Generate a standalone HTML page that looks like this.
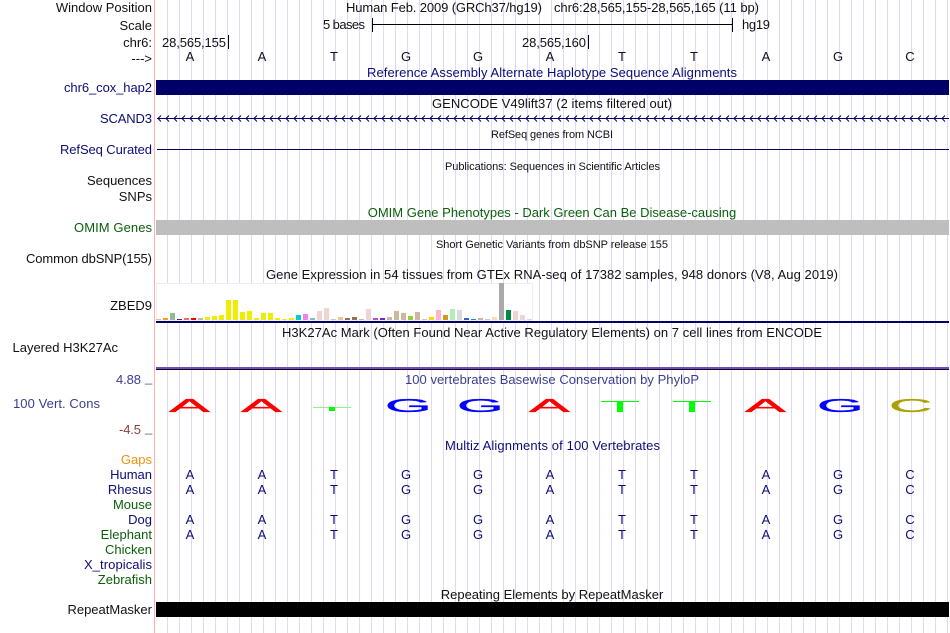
<!DOCTYPE html>
<html>
<head>
<meta charset="utf-8">
<style>
html,body{margin:0;padding:0;background:#fff;width:950px;height:633px;overflow:hidden}
svg{display:block;position:absolute;left:0;top:0}
text{font-family:"Liberation Sans",sans-serif;font-size:13px}
.r{text-anchor:end}
.c{text-anchor:middle}
.n{fill:#0c0c78}
.g{fill:#0a5f0a}
.k{fill:#111}
.s{font-size:11px}
.b{font-size:12px;stroke-width:.22px}
</style>
</head>
<body>
<svg width="950" height="633" viewBox="0 0 950 633" xmlns="http://www.w3.org/2000/svg" shape-rendering="crispEdges">
<path fill="none" stroke="#dedaf6" stroke-width="1" d="M167.500 0v633M179.500 0v633M191.500 0v633M203.500 0v633M215.500 0v633M227.500 0v633M239.500 0v633M251.500 0v633M263.500 0v633M275.500 0v633M287.500 0v633M299.500 0v633M311.500 0v633M323.500 0v633M335.500 0v633M347.500 0v633M359.500 0v633M371.500 0v633M383.500 0v633M395.500 0v633M407.500 0v633M419.500 0v633M431.500 0v633M443.500 0v633M455.500 0v633M467.500 0v633M479.500 0v633M491.500 0v633M503.500 0v633M515.500 0v633M527.500 0v633M539.500 0v633M551.500 0v633M563.500 0v633M575.500 0v633M587.500 0v633M599.500 0v633M611.500 0v633M623.500 0v633M635.500 0v633M647.500 0v633M659.500 0v633M671.500 0v633M683.500 0v633M695.500 0v633M707.500 0v633M719.500 0v633M731.500 0v633M743.500 0v633M755.500 0v633M767.500 0v633M779.500 0v633M791.500 0v633M803.500 0v633M815.500 0v633M827.500 0v633M839.500 0v633M851.500 0v633M863.500 0v633M875.500 0v633M887.500 0v633M899.500 0v633M911.500 0v633M923.500 0v633M935.500 0v633M947.500 0v633"/>
<rect x="154" y="0" width="1" height="633" fill="#ffb0b0"/>

<!-- header -->
<text class="r k" x="152" y="12">Window Position</text>
<text class="r k" x="152" y="30">Scale</text>
<text class="r k" x="152" y="47">chr6:</text>
<text class="r k" x="152" y="63">---&gt;</text>
<text class="k" x="346" y="12" textLength="196">Human Feb. 2009 (GRCh37/hg19)</text>
<text class="k" x="554" y="12" textLength="205">chr6:28,565,155-28,565,165 (11 bp)</text>
<text class="k" x="323" y="29" textLength="42">5 bases</text>
<text class="k" x="742" y="29" textLength="28">hg19</text>
<text class="k" x="162" y="47" textLength="64">28,565,155</text>
<text class="k" x="522" y="47" textLength="64">28,565,160</text>
<rect x="372" y="18" width="1" height="14" fill="#000"/>
<rect x="372" y="24" width="360" height="1" fill="#000"/>
<rect x="732" y="18" width="1" height="14" fill="#000"/>
<rect x="228" y="35" width="1" height="14" fill="#000"/>
<rect x="588" y="35" width="1" height="14" fill="#000"/>
<text class="c k" x="190" y="61">A</text><text class="c k" x="262" y="61">A</text><text class="c k" x="334" y="61">T</text><text class="c k" x="406" y="61">G</text><text class="c k" x="478" y="61">G</text><text class="c k" x="550" y="61">A</text><text class="c k" x="622" y="61">T</text><text class="c k" x="694" y="61">T</text><text class="c k" x="766" y="61">A</text><text class="c k" x="838" y="61">G</text><text class="c k" x="910" y="61">C</text>

<!-- alt haplotypes -->
<text x="367" y="77" fill="#0c0c78" textLength="370">Reference Assembly Alternate Haplotype Sequence Alignments</text>
<text class="n" x="64" y="92" textLength="88">chr6_cox_hap2</text>
<rect x="156" y="80" width="793" height="15" fill="#000066"/>

<!-- gencode -->
<text class="k" x="432" y="108" textLength="240">GENCODE V49lift37 (2 items filtered out)</text>
<text class="n" x="100" y="123" textLength="52">SCAND3</text>
<rect x="157" y="118" width="792" height="1" fill="#000066"/>
<path fill="none" stroke="#000066" stroke-width="1" shape-rendering="auto" d="M161 115.500l-3 3 3 3M169 115.500l-3 3 3 3M177 115.500l-3 3 3 3M185 115.500l-3 3 3 3M193 115.500l-3 3 3 3M201 115.500l-3 3 3 3M209 115.500l-3 3 3 3M217 115.500l-3 3 3 3M225 115.500l-3 3 3 3M233 115.500l-3 3 3 3M241 115.500l-3 3 3 3M249 115.500l-3 3 3 3M257 115.500l-3 3 3 3M265 115.500l-3 3 3 3M273 115.500l-3 3 3 3M281 115.500l-3 3 3 3M289 115.500l-3 3 3 3M297 115.500l-3 3 3 3M305 115.500l-3 3 3 3M313 115.500l-3 3 3 3M321 115.500l-3 3 3 3M329 115.500l-3 3 3 3M337 115.500l-3 3 3 3M345 115.500l-3 3 3 3M353 115.500l-3 3 3 3M361 115.500l-3 3 3 3M369 115.500l-3 3 3 3M377 115.500l-3 3 3 3M385 115.500l-3 3 3 3M393 115.500l-3 3 3 3M401 115.500l-3 3 3 3M409 115.500l-3 3 3 3M417 115.500l-3 3 3 3M425 115.500l-3 3 3 3M433 115.500l-3 3 3 3M441 115.500l-3 3 3 3M449 115.500l-3 3 3 3M457 115.500l-3 3 3 3M465 115.500l-3 3 3 3M473 115.500l-3 3 3 3M481 115.500l-3 3 3 3M489 115.500l-3 3 3 3M497 115.500l-3 3 3 3M505 115.500l-3 3 3 3M513 115.500l-3 3 3 3M521 115.500l-3 3 3 3M529 115.500l-3 3 3 3M537 115.500l-3 3 3 3M545 115.500l-3 3 3 3M553 115.500l-3 3 3 3M561 115.500l-3 3 3 3M569 115.500l-3 3 3 3M577 115.500l-3 3 3 3M585 115.500l-3 3 3 3M593 115.500l-3 3 3 3M601 115.500l-3 3 3 3M609 115.500l-3 3 3 3M617 115.500l-3 3 3 3M625 115.500l-3 3 3 3M633 115.500l-3 3 3 3M641 115.500l-3 3 3 3M649 115.500l-3 3 3 3M657 115.500l-3 3 3 3M665 115.500l-3 3 3 3M673 115.500l-3 3 3 3M681 115.500l-3 3 3 3M689 115.500l-3 3 3 3M697 115.500l-3 3 3 3M705 115.500l-3 3 3 3M713 115.500l-3 3 3 3M721 115.500l-3 3 3 3M729 115.500l-3 3 3 3M737 115.500l-3 3 3 3M745 115.500l-3 3 3 3M753 115.500l-3 3 3 3M761 115.500l-3 3 3 3M769 115.500l-3 3 3 3M777 115.500l-3 3 3 3M785 115.500l-3 3 3 3M793 115.500l-3 3 3 3M801 115.500l-3 3 3 3M809 115.500l-3 3 3 3M817 115.500l-3 3 3 3M825 115.500l-3 3 3 3M833 115.500l-3 3 3 3M841 115.500l-3 3 3 3M849 115.500l-3 3 3 3M857 115.500l-3 3 3 3M865 115.500l-3 3 3 3M873 115.500l-3 3 3 3M881 115.500l-3 3 3 3M889 115.500l-3 3 3 3M897 115.500l-3 3 3 3M905 115.500l-3 3 3 3M913 115.500l-3 3 3 3M921 115.500l-3 3 3 3M929 115.500l-3 3 3 3M937 115.500l-3 3 3 3M945 115.500l-3 3 3 3"/>

<!-- refseq -->
<text class="k s" x="491" y="138" textLength="122">RefSeq genes from NCBI</text>
<text class="n" x="60" y="154" textLength="92">RefSeq Curated</text>
<rect x="157" y="149" width="792" height="1" fill="#000066"/>

<text class="k s" x="445" y="170" textLength="215">Publications: Sequences in Scientific Articles</text>
<text class="r k" x="152" y="185">Sequences</text>
<text class="r k" x="152" y="201">SNPs</text>

<!-- omim -->
<text class="c g" x="552" y="217">OMIM Gene Phenotypes - Dark Green Can Be Disease-causing</text>
<text class="g" x="74" y="232" textLength="78">OMIM Genes</text>
<rect x="156" y="220" width="793" height="15" fill="#bebebe"/>

<text class="k s" x="436" y="248" textLength="232">Short Genetic Variants from dbSNP release 155</text>
<text class="k" x="26" y="263" textLength="126">Common dbSNP(155)</text>

<!-- gtex -->
<text class="k" x="266" y="279" textLength="572">Gene Expression in 54 tissues from GTEx RNA-seq of 17382 samples, 948 donors (V8, Aug 2019)</text>
<text class="r k" x="152" y="310">ZBED9</text>
<rect x="156.500" y="283.500" width="376" height="37" fill="#fff" stroke="#eeeeee" stroke-width="1"/>
<g>
<rect x="156" y="319" width="5" height="1" fill="#e5b98f"/>
<rect x="163" y="318" width="5" height="2" fill="#ff9a1f"/>
<rect x="170" y="313" width="5" height="7" fill="#8fbc8f"/>
<rect x="177" y="319" width="5" height="1" fill="#6b1f6b"/>
<rect x="184" y="318" width="5" height="2" fill="#ff6a5f"/>
<rect x="191" y="318" width="5" height="2" fill="#ff0000"/>
<rect x="198" y="318" width="5" height="2" fill="#cdb79e"/>
<rect x="205" y="317" width="5" height="3" fill="#eeee00"/>
<rect x="212" y="316" width="5" height="4" fill="#eeee00"/>
<rect x="219" y="315" width="5" height="5" fill="#eeee00"/>
<rect x="226" y="300" width="5" height="20" fill="#eeee00"/>
<rect x="233" y="300" width="5" height="20" fill="#eeee00"/>
<rect x="240" y="312" width="5" height="8" fill="#eeee00"/>
<rect x="247" y="311" width="5" height="9" fill="#eeee00"/>
<rect x="254" y="318" width="5" height="2" fill="#eeee00"/>
<rect x="261" y="313" width="5" height="7" fill="#eeee00"/>
<rect x="268" y="313" width="5" height="7" fill="#eeee00"/>
<rect x="275" y="318" width="5" height="2" fill="#eeee00"/>
<rect x="282" y="319" width="5" height="1" fill="#eeee00"/>
<rect x="289" y="318" width="5" height="2" fill="#eeee00"/>
<rect x="296" y="315" width="5" height="5" fill="#00cdcd"/>
<rect x="303" y="314" width="5" height="6" fill="#ee82ee"/>
<rect x="310" y="318" width="5" height="2" fill="#8db6cd"/>
<rect x="317" y="311" width="5" height="9" fill="#eed5d2"/>
<rect x="324" y="308" width="5" height="12" fill="#eed5d2"/>
<rect x="331" y="319" width="5" height="1" fill="#cdc5bf"/>
<rect x="338" y="317" width="5" height="3" fill="#eec591"/>
<rect x="345" y="318" width="5" height="2" fill="#8b7355"/>
<rect x="352" y="317" width="5" height="3" fill="#8b7355"/>
<rect x="359" y="319" width="5" height="1" fill="#cdb79e"/>
<rect x="366" y="309" width="5" height="11" fill="#eed5d2"/>
<rect x="373" y="318" width="5" height="2" fill="#b452cd"/>
<rect x="380" y="318" width="5" height="2" fill="#7d26cd"/>
<rect x="387" y="317" width="5" height="3" fill="#cdb79e"/>
<rect x="394" y="311" width="5" height="9" fill="#cdb79e"/>
<rect x="401" y="313" width="5" height="7" fill="#cdb79e"/>
<rect x="408" y="316" width="5" height="4" fill="#9acd32"/>
<rect x="415" y="312" width="5" height="8" fill="#cdb79e"/>
<rect x="422" y="319" width="5" height="1" fill="#cdc9c9"/>
<rect x="429" y="317" width="5" height="3" fill="#ffd700"/>
<rect x="436" y="310" width="5" height="10" fill="#ffb5c5"/>
<rect x="443" y="315" width="5" height="5" fill="#cd9b1d"/>
<rect x="450" y="309" width="5" height="11" fill="#b4eeb4"/>
<rect x="457" y="310" width="5" height="10" fill="#d9d9d9"/>
<rect x="464" y="318" width="5" height="2" fill="#3a5fcd"/>
<rect x="471" y="319" width="5" height="1" fill="#1c86ee"/>
<rect x="478" y="318" width="5" height="2" fill="#cdb79e"/>
<rect x="485" y="319" width="5" height="1" fill="#cdc5bf"/>
<rect x="492" y="317" width="5" height="3" fill="#ffdab9"/>
<rect x="499" y="283" width="5" height="37" fill="#aaaaaa"/>
<rect x="506" y="310" width="5" height="10" fill="#008b45"/>
<rect x="513" y="311" width="5" height="9" fill="#eed5d2"/>
<rect x="520" y="315" width="5" height="5" fill="#eed5d2"/>
<rect x="527" y="319" width="5" height="1" fill="#d9d9d9"/>
</g>
<rect x="156" y="321" width="793" height="2" fill="#000066"/>

<!-- h3k27ac -->
<text class="k" x="282" y="337" textLength="540">H3K27Ac Mark (Often Found Near Active Regulatory Elements) on 7 cell lines from ENCODE</text>
<text class="r k" x="118" y="352">Layered H3K27Ac</text>
<rect x="156" y="367" width="793" height="2" fill="#6a4fc0"/>
<rect x="156" y="369" width="793" height="1" fill="#200020"/>

<!-- conservation -->
<text x="405" y="384" fill="#3d3d8f" textLength="294">100 vertebrates Basewise Conservation by PhyloP</text>
<text x="116" y="384" fill="#3d3d8f" textLength="25">4.88</text>
<text x="119" y="434" fill="#8f3d3d" textLength="22">-4.5</text>
<text x="145" y="382" fill="#666">_</text>
<text x="145" y="432" fill="#666">_</text>
<text x="13" y="408" fill="#3d3d8f" textLength="87">100 Vert. Cons</text>

<!-- logo -->
<g shape-rendering="auto">
<text class="b" transform="translate(169 412) scale(5.1 1.55)" fill="#ff0000" stroke="#ff0000">A</text>
<text class="b" transform="translate(241 412) scale(5.1 1.55)" fill="#ff0000" stroke="#ff0000">A</text>
<text class="b" transform="translate(529 412) scale(5.1 1.55)" fill="#ff0000" stroke="#ff0000">A</text>
<text class="b" transform="translate(745 412) scale(5.1 1.55)" fill="#ff0000" stroke="#ff0000">A</text>
<text class="b" transform="translate(385 412) scale(5 1.55)" fill="#0000ff" stroke="#0000ff">G</text>
<text class="b" transform="translate(457 412) scale(5 1.55)" fill="#0000ff" stroke="#0000ff">G</text>
<text class="b" transform="translate(817 412) scale(5 1.55)" fill="#0000ff" stroke="#0000ff">G</text>
<text class="b" transform="translate(889 412) scale(5 1.55)" fill="#aaa000" stroke="#aaa000">C</text>
</g>
<rect x="313" y="407" width="38" height="1" fill="#90f090"/>
<rect x="329" y="407" width="6" height="4" fill="#00ff00"/>
<rect x="601" y="401" width="38" height="1" fill="#00ff00"/>
<rect x="617" y="401" width="6" height="11" fill="#00ff00"/>
<rect x="673" y="401" width="38" height="1" fill="#00ff00"/>
<rect x="689" y="401" width="6" height="11" fill="#00ff00"/>

<!-- multiz -->
<text class="n" x="445" y="450" textLength="215">Multiz Alignments of 100 Vertebrates</text>
<text class="r" x="152" y="464" fill="#f09010">Gaps</text>
<text class="r n" x="152" y="479">Human</text>
<text class="r n" x="152" y="494">Rhesus</text>
<text class="r g" x="152" y="509">Mouse</text>
<text class="r n" x="152" y="524">Dog</text>
<text class="r g" x="152" y="539">Elephant</text>
<text class="r g" x="152" y="554">Chicken</text>
<text class="n" x="84" y="569" textLength="68">X_tropicalis</text>
<text class="r g" x="152" y="584">Zebrafish</text>

<text class="c n" x="190" y="479">A</text><text class="c n" x="262" y="479">A</text><text class="c n" x="334" y="479">T</text><text class="c n" x="406" y="479">G</text><text class="c n" x="478" y="479">G</text><text class="c n" x="550" y="479">A</text><text class="c n" x="622" y="479">T</text><text class="c n" x="694" y="479">T</text><text class="c n" x="766" y="479">A</text><text class="c n" x="838" y="479">G</text><text class="c n" x="910" y="479">C</text>
<text class="c n" x="190" y="494">A</text><text class="c n" x="262" y="494">A</text><text class="c n" x="334" y="494">T</text><text class="c n" x="406" y="494">G</text><text class="c n" x="478" y="494">G</text><text class="c n" x="550" y="494">A</text><text class="c n" x="622" y="494">T</text><text class="c n" x="694" y="494">T</text><text class="c n" x="766" y="494">A</text><text class="c n" x="838" y="494">G</text><text class="c n" x="910" y="494">C</text>
<text class="c n" x="190" y="524">A</text><text class="c n" x="262" y="524">A</text><text class="c n" x="334" y="524">T</text><text class="c n" x="406" y="524">G</text><text class="c n" x="478" y="524">G</text><text class="c n" x="550" y="524">A</text><text class="c n" x="622" y="524">T</text><text class="c n" x="694" y="524">T</text><text class="c n" x="766" y="524">A</text><text class="c n" x="838" y="524">G</text><text class="c n" x="910" y="524">C</text>
<text class="c n" x="190" y="539">A</text><text class="c n" x="262" y="539">A</text><text class="c n" x="334" y="539">T</text><text class="c n" x="406" y="539">G</text><text class="c n" x="478" y="539">G</text><text class="c n" x="550" y="539">A</text><text class="c n" x="622" y="539">T</text><text class="c n" x="694" y="539">T</text><text class="c n" x="766" y="539">A</text><text class="c n" x="838" y="539">G</text><text class="c n" x="910" y="539">C</text>

<!-- repeatmasker -->
<text class="c k" x="552" y="599">Repeating Elements by RepeatMasker</text>
<text class="r k" x="152" y="614">RepeatMasker</text>
<rect x="156" y="602" width="793" height="15" fill="#000"/>
</svg>
</body>
</html>
